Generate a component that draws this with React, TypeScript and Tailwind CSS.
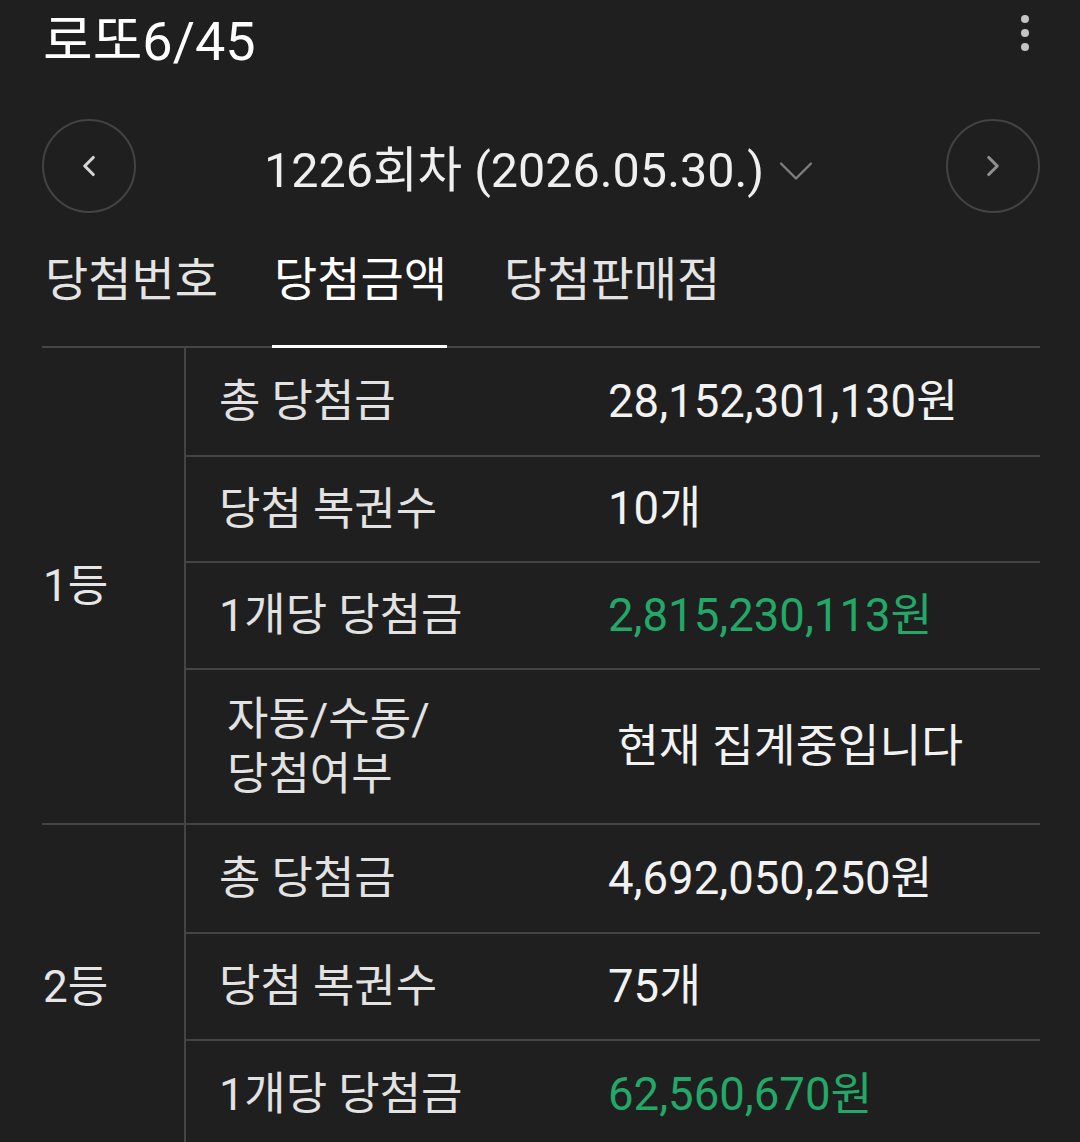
import { ChevronLeft, ChevronRight, ChevronDown } from 'lucide-react';

type Row = { label: string[]; value: string; green?: boolean; h: string; tall?: boolean };

const groups: { rank: string; rows: Row[] }[] = [
  {
    rank: '1등',
    rows: [
      { label: ['총 당첨금'], value: '28,152,301,130원', h: 'h-[109px]' },
      { label: ['당첨 복권수'], value: '10개', h: 'h-[106px]' },
      { label: ['1개당 당첨금'], value: '2,815,230,113원', green: true, h: 'h-[107px]' },
      { label: ['자동/수동/', '당첨여부'], value: '현재 집계중입니다', h: 'h-[153px]', tall: true },
    ],
  },
  {
    rank: '2등',
    rows: [
      { label: ['총 당첨금'], value: '4,692,050,250원', h: 'h-[109px]' },
      { label: ['당첨 복권수'], value: '75개', h: 'h-[107px]' },
      { label: ['1개당 당첨금'], value: '62,560,670원', green: true, h: 'h-[107px]' },
    ],
  },
];

export default function App() {
  return (
    <div className="min-h-screen bg-[#1f1f1f] text-[#ececec] font-['Roboto','Noto_Sans_CJK_KR',sans-serif] pl-[42px] pr-[40px] overflow-hidden">
      {/* title bar */}
      <div className="h-[84px] flex items-center justify-between">
        <h1 className="text-[54px] leading-none text-white pl-[1px]">로또6/45</h1>
        <div className="flex flex-col gap-[6px] mr-[11px] -mt-[18px]">
          <span className="w-[8px] h-[8px] rounded-full bg-[#c4c4c4]" />
          <span className="w-[8px] h-[8px] rounded-full bg-[#c4c4c4]" />
          <span className="w-[8px] h-[8px] rounded-full bg-[#c4c4c4]" />
        </div>
      </div>

      {/* draw selector */}
      <div className="h-[164px] flex items-center justify-between">
        <button className="w-[94px] h-[94px] rounded-full border-2 border-[#434343] flex items-center justify-center">
          <ChevronLeft className="w-[34px] h-[34px] text-[#d6d6d6]" strokeWidth={2.2} />
        </button>
        <div className="flex items-center gap-[2px] ml-[8px] mt-[10px]">
          <span className="text-[48.5px] leading-none text-[#efefef]">1226회차 (2026.05.30.)</span>
          <ChevronDown className="w-[60px] h-[60px] text-[#808080]" strokeWidth={0.9} />
        </div>
        <button className="w-[94px] h-[94px] rounded-full border-2 border-[#434343] flex items-center justify-center">
          <ChevronRight className="w-[34px] h-[34px] text-[#8f8f8f]" strokeWidth={2.2} />
        </button>
      </div>

      {/* tabs */}
      <div className="h-[100px] flex border-b-2 border-[#464646]">
        <div className="pl-[3px] pt-[4px] text-[47px] leading-[56px] text-[#e4e4e4]">당첨번호</div>
        <div className="ml-[54px] w-[175px] pt-[4px] text-[47px] leading-[56px] text-white border-b-[3px] border-white -mb-[2px] pl-[2px]">
          당첨금액
        </div>
        <div className="ml-[57px] pt-[4px] text-[47px] leading-[56px] text-[#e4e4e4]">당첨판매점</div>
      </div>

      {/* prize table */}
      {groups.map((g) => (
        <div key={g.rank} className="flex border-b-2 border-[#444444]">
          <div className="w-[144px] shrink-0 flex items-center border-r-2 border-[#444444] text-[44px] text-[#e6e6e6] pl-[1px]">
            {g.rank}
          </div>
          <div className="flex-1">
            {g.rows.map((r, i) => (
              <div
                key={i}
                className={`${r.h} flex items-center ${i < g.rows.length - 1 ? 'border-b-2 border-[#444444]' : ''}`}
              >
                <div
                  className={`w-[389px] shrink-0 text-[45px] leading-[55px] text-[#e2e2e2] ${r.tall ? 'pl-[41px]' : 'pl-[33px]'}`}
                >
                  {r.label.map((l) => (
                    <div key={l}>{l}</div>
                  ))}
                </div>
                <div
                  className={`text-[45.5px] leading-none ${r.tall ? 'pl-[42px] text-[#e8e8e8]' : 'pl-[33px]'} ${r.green ? 'text-[#22a867]' : 'text-[#f2f2f2]'}`}
                >
                  {r.value}
                </div>
              </div>
            ))}
          </div>
        </div>
      ))}
    </div>
  );
}
